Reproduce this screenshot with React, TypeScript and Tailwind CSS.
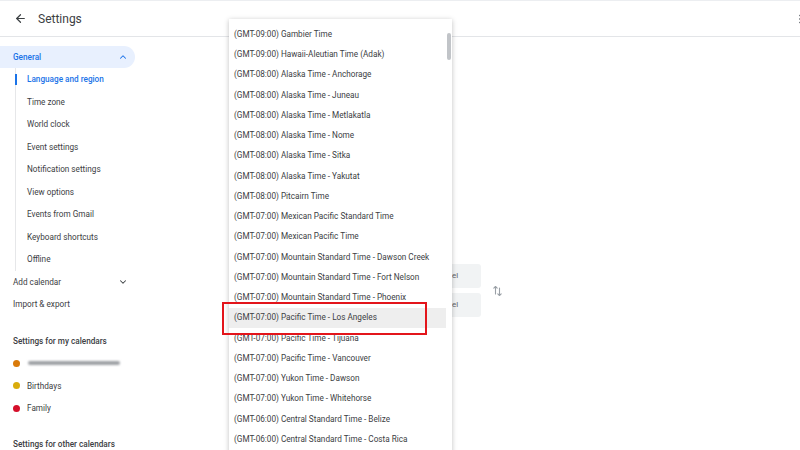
import { ArrowLeft, ChevronDown, ChevronUp, EllipsisVertical } from "lucide-react";

const generalItems = [
    "Language and region",
    "Time zone",
    "World clock",
    "Event settings",
    "Notification settings",
    "View options",
    "Events from Gmail",
    "Keyboard shortcuts",
    "Offline",
];

const zones = [
    "(GMT-09:00) Gambier Time",
    "(GMT-09:00) Hawaii-Aleutian Time (Adak)",
    "(GMT-08:00) Alaska Time - Anchorage",
    "(GMT-08:00) Alaska Time - Juneau",
    "(GMT-08:00) Alaska Time - Metlakatla",
    "(GMT-08:00) Alaska Time - Nome",
    "(GMT-08:00) Alaska Time - Sitka",
    "(GMT-08:00) Alaska Time - Yakutat",
    "(GMT-08:00) Pitcairn Time",
    "(GMT-07:00) Mexican Pacific Standard Time",
    "(GMT-07:00) Mexican Pacific Time",
    "(GMT-07:00) Mountain Standard Time - Dawson Creek",
    "(GMT-07:00) Mountain Standard Time - Fort Nelson",
    "(GMT-07:00) Mountain Standard Time - Phoenix",
    "(GMT-07:00) Pacific Time - Los Angeles",
    "(GMT-07:00) Pacific Time - Tijuana",
    "(GMT-07:00) Pacific Time - Vancouver",
    "(GMT-07:00) Yukon Time - Dawson",
    "(GMT-07:00) Yukon Time - Whitehorse",
    "(GMT-06:00) Central Standard Time - Belize",
    "(GMT-06:00) Central Standard Time - Costa Rica",
];

const calendars = [
    { name: "", color: "bg-[#d97a0a]" },
    { name: "Birthdays", color: "bg-[#d9ac0c]" },
    { name: "Family", color: "bg-[#d50f2a]" },
];

export default function App() {
    return (
        <div className="relative w-[800px] h-[450px] overflow-hidden bg-white text-[#3c4043] font-['Roboto',sans-serif] border-t border-[#eceef1]">
            {/* Header */}
            <div className="flex items-center h-[36px] border-b border-[#e3e5e8] pl-[14px]">
                <ArrowLeft size={13} strokeWidth={2.2} className="text-[#3c4043]" />
                <span className="ml-[11px] text-[12px] text-[#3c4043]">Settings</span>
                <div className="ml-auto mr-[-6px] text-[#5f6368]">
                    <EllipsisVertical size={12} />
                </div>
            </div>

            <div className="flex">
                {/* Sidebar */}
                <div className="w-[230px] shrink-0 pt-[9px] text-[8.2px]">
                    <div className="flex items-center justify-between w-[135px] h-[22px] rounded-r-full bg-[#e8f0fe] pl-[13px] pr-[7px] text-[#1a73e8] font-medium">
                        <span>General</span>
                        <ChevronUp size={10} strokeWidth={2.5} />
                    </div>
                    <div className="ml-[15px] border-l border-[#e6e7e9]">
                        {generalItems.map((item, i) => (
                            <div key={item} className="relative flex items-center h-[22.5px] pl-[11px]">
                                {i === 0 && <div className="absolute left-[-1.5px] top-[6px] w-[2px] h-[11px] bg-[#1a73e8]"></div>}
                                <span className={i === 0 ? "text-[#1a73e8] font-medium" : ""}>{item}</span>
                            </div>
                        ))}
                    </div>
                    <div className="flex items-center justify-between w-[135px] h-[22.5px] pl-[13px] pr-[7px]">
                        <span>Add calendar</span>
                        <ChevronDown size={10} strokeWidth={2.5} />
                    </div>
                    <div className="flex items-center h-[22.5px] pl-[13px]">Import &amp; export</div>

                    <div className="flex items-center h-[22.5px] pl-[13px] mt-[14px] font-medium text-[#3c4043]">Settings for my calendars</div>
                    {calendars.map((c, i) => (
                        <div key={i} className="flex items-center h-[22.5px] pl-[13px]">
                            <span className={`w-[7px] h-[7px] rounded-full ${c.color}`}></span>
                            {c.name ? (
                                <span className="ml-[7px]">{c.name}</span>
                            ) : (
                                <span className="ml-[8px] w-[92px] h-[4px] rounded-full bg-[#9ea1a5] blur-[1.2px]"></span>
                            )}
                        </div>
                    ))}
                    <div className="flex items-center h-[22.5px] pl-[13px] mt-[13px] font-medium">Settings for other calendars</div>
                </div>

                {/* Main content (mostly behind the dropdown) */}
                <div className="flex-1 pt-[227px] pl-[216px]">
                    <div className="flex items-center gap-[12px]">
                        <div className="flex flex-col gap-[5px]">
                            <div className="w-[35px] h-[24px] rounded-[3px] bg-[#f1f3f4] pl-[6px] pt-[6px] text-[8px] text-[#5f6368]">el</div>
                            <div className="w-[35px] h-[24px] rounded-[3px] bg-[#f1f3f4] pl-[6px] pt-[6px] text-[8px] text-[#5f6368]">el</div>
                        </div>
                        <svg width="9" height="12" viewBox="0 0 9 12" fill="none" stroke="#9aa0a6" strokeWidth="1.1" strokeLinecap="round" strokeLinejoin="round">
                            <path d="M2.5 9V1.5M0.8 3.2L2.5 1.5 4.2 3.2" />
                            <path d="M6.5 3V10.5M4.8 8.8L6.5 10.5 8.2 8.8" />
                        </svg>
                    </div>
                </div>
            </div>

            {/* Time zone dropdown */}
            <div className="absolute left-[229px] top-[18px] w-[223px] h-[440px] bg-white shadow-[0_1px_5px_rgba(0,0,0,0.25)] pt-[5px] pr-[6px] text-[8.2px] text-[#3c4043]">
                {zones.map((z) => (
                    <div
                        key={z}
                        className={`flex items-center h-[20.25px] pl-[5px] whitespace-nowrap ${z.includes("Los Angeles") ? "bg-[#eeeeee]" : ""}`}
                    >
                        {z}
                    </div>
                ))}
                <div className="absolute right-[1px] top-[14px] w-[4px] h-[27px] rounded-full bg-[#c1c4c8]"></div>
            </div>

            {/* Red highlight box */}
            <div className="absolute left-[222px] top-[301px] w-[205px] h-[33px] border-[2.5px] border-[#e3151b]"></div>
        </div>
    );
}
